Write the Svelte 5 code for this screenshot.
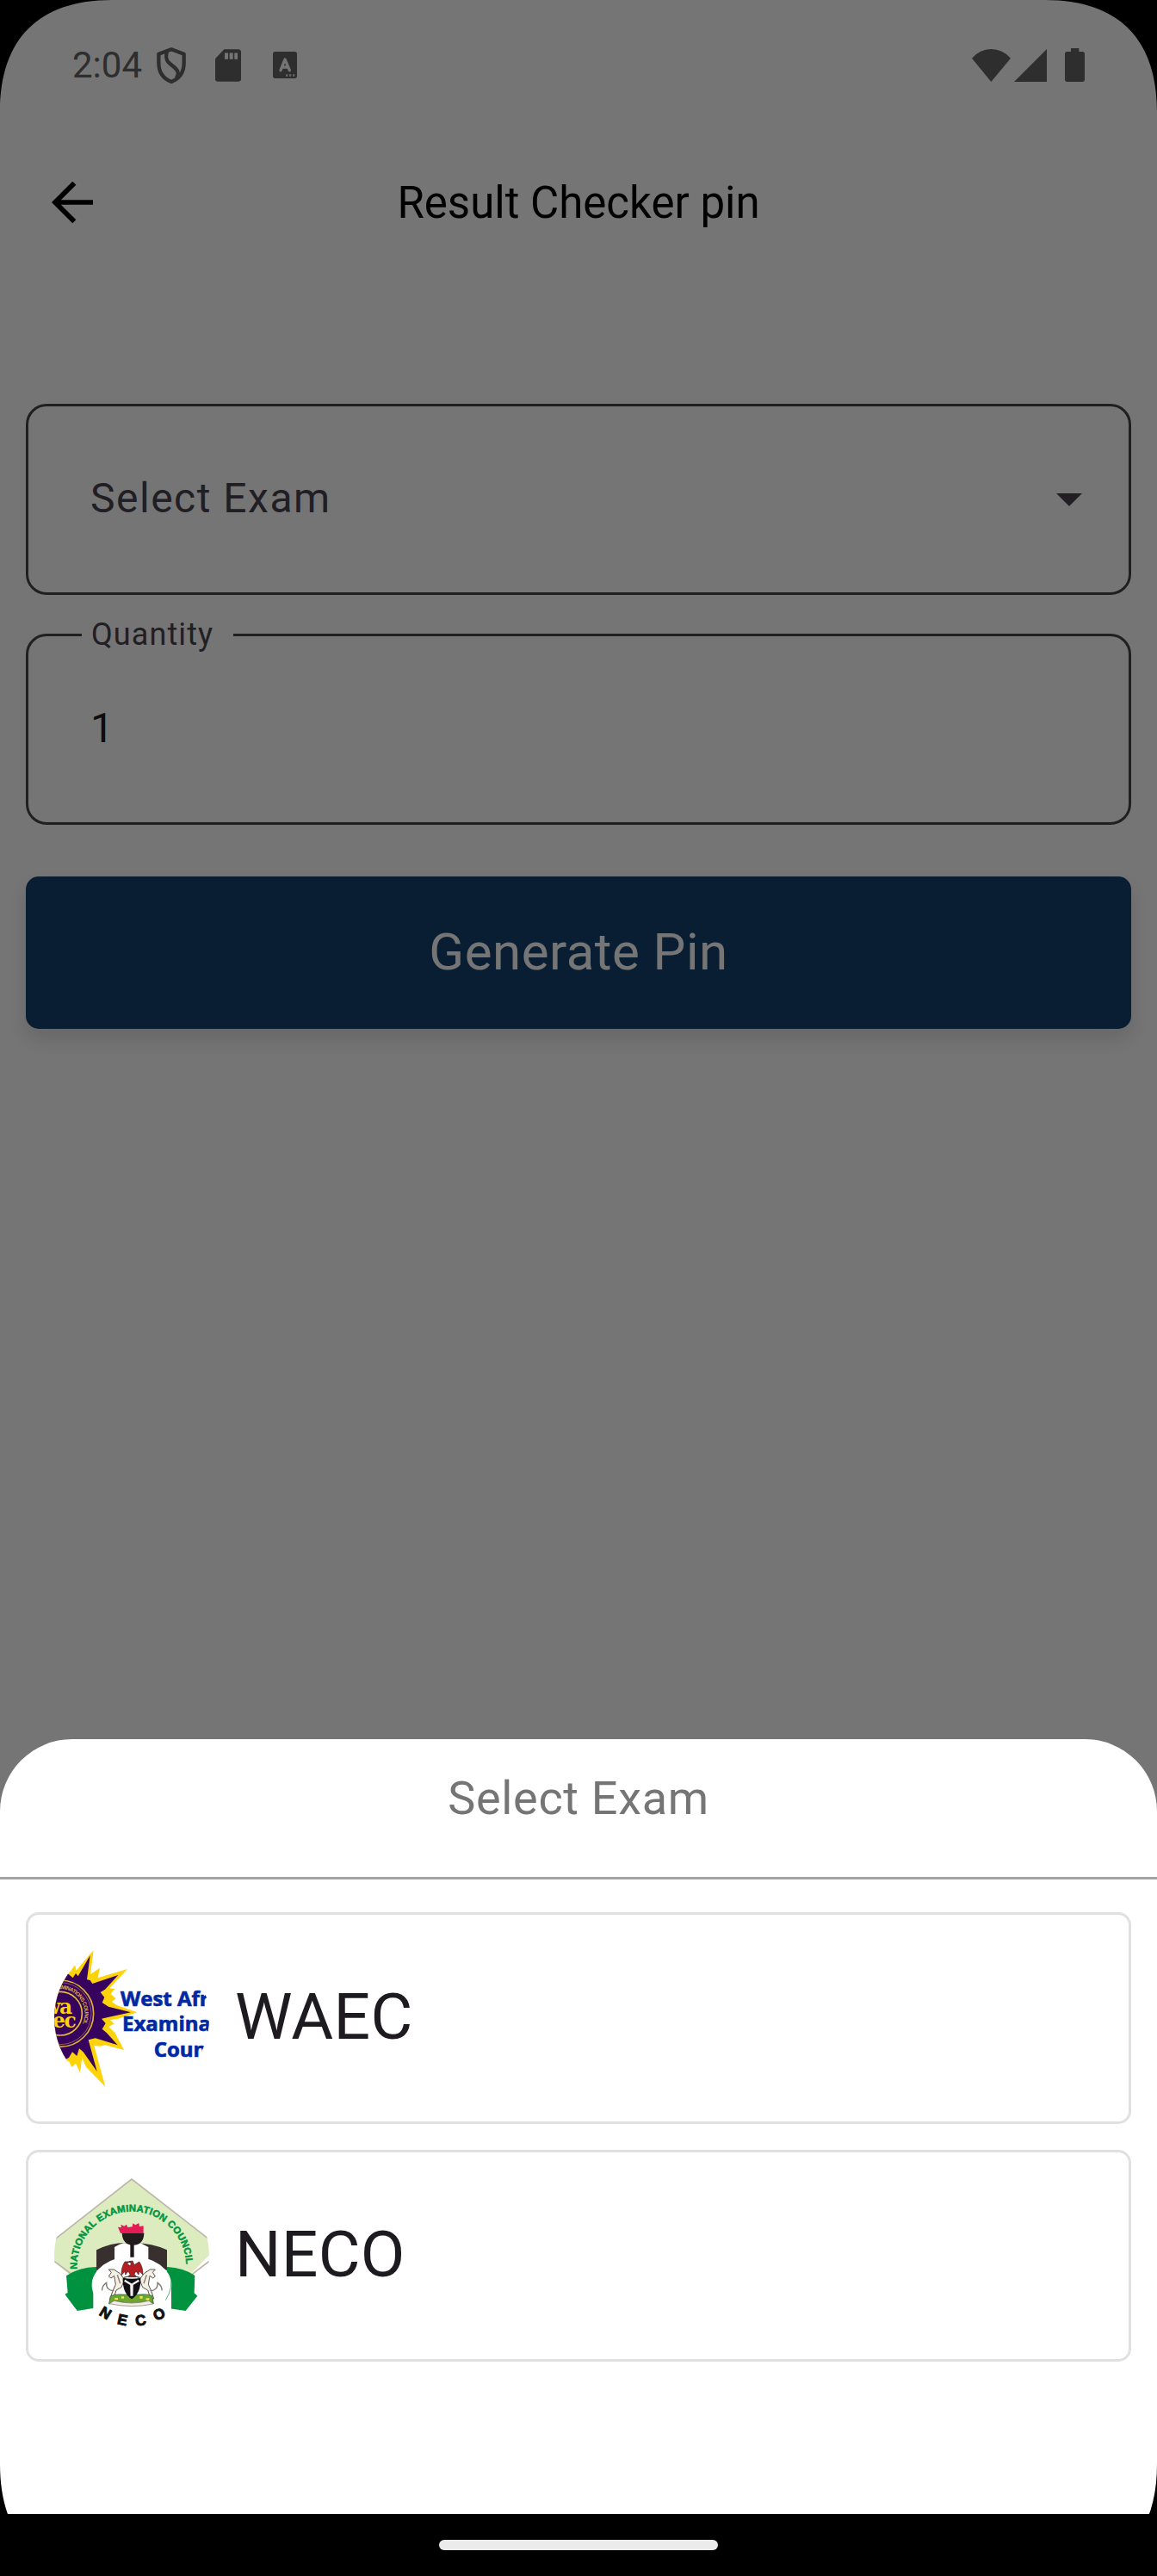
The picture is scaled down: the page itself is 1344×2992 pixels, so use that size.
<script lang="ts">
	let quantity = 1;
	let exams = ['WAEC', 'NECO'];
	let corners = ['left', 'right', 'bottom-left', 'bottom-right'];
</script>

<div class="screen">
	<div class="status-bar">
		<span class="time">2:04</span>
		<svg class="shield" viewBox="546 163 102 126">
			<path
				d="M597 170L553 186V217C553 246 567 271 597 283C627 271 641 246 641 217V186ZM582 176C577 196 578 208 591 219L607 232C623 245 623 256 615 270"
				fill="none"
				stroke="#646464"
				stroke-width="13"
				stroke-linejoin="round"
			/>
		</svg>
		<svg class="sd-card" viewBox="750 170 90 113">
			<path d="M781 170H830Q840 170 840 180V273Q840 283 830 283H760Q750 283 750 273V203Z" fill="#646464" />
			<path d="M783 183h12v22h-12zM800 183h12v22h-12zM817 183h11v22h-11z" fill="#fff" />
		</svg>
		<svg class="keyboard" viewBox="951 180 84 93">
			<rect x="951" y="180" width="84" height="93" rx="8" fill="#646464" />
			<path
				d="M978 245L993 207L1009 245M984 234H1003"
				fill="none"
				stroke="#fff"
				stroke-width="10"
				stroke-linecap="round"
				stroke-linejoin="round"
			/>
			<path d="M996 259h7v7h-7zM1008 259h7v7h-7zM1020 259h7v7h-7z" fill="#ddd" />
		</svg>
		<div class="signals">
			<svg class="wifi" viewBox="255 166 135 114">
				<path d="M255 198Q283 166 322 166Q362 166 390 198L322 280Z" fill="#646464" />
			</svg>
			<svg class="cell" viewBox="401 167 113 113">
				<path d="M514 167V280H401Z" fill="#646464" />
			</svg>
			<svg class="battery" viewBox="579 165 69 117">
				<path
					d="M600 165H628V177H640Q648 177 648 185V274Q648 282 640 282H587Q579 282 579 274V185Q579 177 587 177H600Z"
					fill="#646464"
				/>
			</svg>
		</div>
	</div>

	<header class="app-bar">
		<svg class="back" viewBox="180 632 144 144">
			<path d="M259 637L192 704L259 771M192 704H324" fill="none" stroke="#000" stroke-width="17" />
		</svg>
		<h1>Result Checker pin</h1>
	</header>

	<main>
		<div class="field">
			<span class="placeholder">Select Exam</span>
			<svg class="caret" viewBox="0 0 30 15"><path d="M0 0H30L15 15Z" fill="#49454f" /></svg>
		</div>
		<div class="field">
			<span class="label">Quantity</span>
			<span class="value">{quantity}</span>
		</div>
		<button>Generate Pin</button>
	</main>

	<div class="scrim"></div>

	<section class="sheet">
		<h2>Select Exam</h2>
		<div class="options">
			{#each exams as exam}
				<div class="option">
					{#if exam === 'WAEC'}
						<svg class="logo" viewBox="129 132 540 540">
							<path
								d="M100 190L178 232L186 240L200 212L206 236L266 165L255 250L288 227L281 262L384 231L322 298L340 300L326 318L344 334L330 345L346 357L418 382L350 405L324 408L338 422L318 432L340 452L372 513L306 496L290 500L268 498L307 641L240 572L226 540L219 592L204 560L190 574L180 552L160 560L100 600Z"
								fill="#fdd30a"
							/>
							<path
								d="M100 210L180 250L194 262L204 246L212 256L254 184L243 268L254 270L262 282L352 252L306 302L290 312L304 330L296 348L318 362L396 382L320 398L294 404L308 420L296 440L312 454L350 496L272 472L248 478L278 588L230 520L216 508L208 534L192 520L180 540L100 580Z"
								fill="#36035f"
							/>
							<circle cx="150" cy="386" r="116" fill="none" stroke="#d9ae3a" stroke-width="5" />
							<circle cx="150" cy="386" r="108" fill="none" stroke="#b98c45" stroke-width="2" />
							<circle cx="150" cy="386" r="76" fill="none" stroke="#e6bd2c" stroke-width="5" />
							<path id="seal-arc" d="M119 306A86 86 0 0 1 205 452" fill="none" />
							<text class="seal-ring">
								<textPath href="#seal-arc" textLength="202">EXAMINATIONS COUNCIL</textPath>
							</text>
							<text class="seal" text-anchor="end">
								<tspan x="209" y="387">wa</tspan>
								<tspan x="202" y="435">ec</tspan>
							</text>
							<text class="council">
								<tspan x="360" y="360">West African</tspan>
								<tspan x="366" y="448">Examinations</tspan>
								<tspan x="476" y="536">Council</tspan>
							</text>
						</svg>
					{:else}
						<svg class="logo" viewBox="129 120 540 540">
							<path d="M399 123L700 357L588 470H200L90 380L100 357Z" fill="#dcecbf" />
							<path
								d="M100 357L399 123L700 357M129 409L200 462M669 409L600 462"
								fill="none"
								stroke="#bdb5a8"
								stroke-width="5"
							/>
							<path
								d="M171 460Q215 430 276 429L290 560L265 573L209 582L166 524L176 519ZM619 459Q580 432 522 429L520 572L587 582L628 530L617 520Z"
								fill="#00923f"
							/>
							<path d="M276 370Q335 340 399 346Q466 344 522 370V440H276Z" fill="#37302e" />
							<path d="M339 360Q356 350 370 346H430L457 360V415H339Z" fill="#fff" />
							<path d="M265 480L537 480V610H265Z" fill="#fff" />
							<ellipse cx="399" cy="492" rx="139" ry="100" fill="#fff" />
							<path d="M531 450Q547 500 517 545" fill="none" stroke="#00923f" stroke-width="2" />
							<path d="M394 345h13v50h-13z" fill="#1d1718" />
							<path d="M365 311H442Q441 352 404 353Q367 352 365 311Z" fill="#211b1c" />
							<path
								d="M360 312L351 290L363 292L361 281L373 287L381 281L385 291L401 289L403 277L412 283L424 276L426 288L440 286V312Z"
								fill="#e21d56"
							/>
							<!-- coat of arms -->
							<path
								d="M395 410L375 411Q362 431 363 458L375 445L377 456L387 444L393 455L386 464H416L408 454L414 444L423 456L425 444L438 456Q438 428 425 411L408 422L402 408L390 410L397 417L394 426L382 417Z"
								fill="#b51d22"
								stroke="#40201e"
								stroke-width="2"
							/>
							<path
								d="M319 438L328 448L319 462L327 468L338 460L343 490L332 515L324 540L336 539L345 510L363 500L374 473L358 452L337 438ZM481 438L472 448L481 462L473 468L462 460L457 490L468 515L476 540L464 539L455 510L437 500L426 473L442 452L463 438Z"
								fill="#f4f0e6"
								stroke="#59524c"
								stroke-width="3"
							/>
							<path
								d="M337 512Q309 511 311 484Q294 496 296 511M463 512Q491 511 489 484Q506 496 504 511M349 457l10 30M451 457l-10 30"
								fill="none"
								stroke="#837a72"
								stroke-width="4"
							/>
							<path
								d="M325 531Q348 520 399 529Q450 520 470 530L475 557L457 548L399 559L342 548L320 558Z"
								fill="#6fa52e"
								stroke="#317143"
								stroke-width="3"
							/>
							<path
								d="M340 537h11v7h-11zM363 532h9v7h-9zM427 531h10v8h-10zM449 538h11v7h-11z"
								fill="#f3e545"
							/>
							<path d="M321 557L338 547Q399 563 459 547L473 558Q399 574 321 557Z" fill="#f2efe7" stroke="#796f65" stroke-width="2" />
							<path d="M368 467Q400 473 430 467Q432 520 399 541Q366 520 368 467Z" fill="#121014" />
							<path
								d="M374 476L397 490L398 530M424 476L401 490L400 530"
								fill="none"
								stroke="#f2f2f2"
								stroke-width="7"
							/>
							<path d="M371 466Q400 457 427 466" fill="none" stroke="#454545" stroke-width="4" />
							<path id="neco-arc" d="M209 437A190 190 0 1 1 587 451" fill="none" />
							<text class="neco-ring">
								<textPath href="#neco-arc" textLength="602">NATIONAL EXAMINATION COUNCIL</textPath>
							</text>
							<path id="neco-base" d="M283 594Q400 678 535 590" fill="none" />
							<text class="neco-name">
								<textPath href="#neco-base" textLength="252">NECO</textPath>
							</text>
						</svg>
					{/if}
					<span class="name">{exam}</span>
				</div>
			{/each}
		</div>
	</section>

	<div class="nav-bar"><div class="handle"></div></div>

	{#each corners as corner}
		<svg class="corner {corner}" viewBox="0 0 130 130"><path d="M0 0H130C45 0 0 45 0 130Z" /></svg>
	{/each}
</div>

<style>
	:global(body) {
		margin: 0;
		background: #000;
	}

	.screen {
		position: relative;
		width: 1344px;
		height: 2992px;
		overflow: hidden;
		background: #fff;
		font-family: Roboto, sans-serif;
	}

	svg {
		display: block;
		flex: none;
	}

	.status-bar {
		display: flex;
		align-items: center;
		box-sizing: border-box;
		height: 151px;
		padding: 0 84px;
	}

	.time {
		width: 98px;
		color: #646464;
		font-size: 42px;
		line-height: 50px;
	}

	.shield {
		width: 34px;
		height: 42px;
		margin-right: 34px;
	}

	.sd-card {
		width: 30px;
		height: 38px;
		margin-right: 37px;
	}

	.keyboard {
		width: 28px;
		height: 31px;
	}

	.signals {
		display: flex;
		align-items: center;
		margin-left: auto;
	}

	.wifi {
		width: 45px;
		height: 38px;
		margin-right: 4px;
	}

	.cell {
		width: 38px;
		height: 38px;
		margin-right: 21px;
	}

	.battery {
		width: 23px;
		height: 39px;
	}

	.app-bar {
		display: grid;
		grid-template-columns: 48px 1fr 48px;
		align-items: center;
		height: 168px;
		padding: 0 60px;
	}

	.back {
		width: 48px;
		height: 48px;
	}

	h1 {
		margin: 0;
		padding-top: 2px;
		color: #000;
		font-size: 51px;
		font-weight: 400;
		line-height: 60px;
		text-align: center;
	}

	main {
		display: flex;
		flex-direction: column;
		padding: 150px 30px 0;
	}

	.field {
		position: relative;
		display: flex;
		align-items: center;
		justify-content: space-between;
		box-sizing: border-box;
		height: 222px;
		margin-bottom: 45px;
		padding: 0 54px 3px 72px;
		border: 3px solid #464646;
		border-radius: 24px;
		color: #49454f;
		font-size: 48px;
		letter-spacing: 1.5px;
		line-height: 60px;
	}

	.label {
		position: absolute;
		top: -22px;
		left: 62px;
		box-sizing: border-box;
		width: 176px;
		padding-left: 11px;
		background: #fff;
		font-size: 36px;
		letter-spacing: 1.1px;
		line-height: 40px;
	}

	.value {
		color: #1d1b20;
	}

	.caret {
		width: 30px;
		height: 15px;
		margin-top: 4px;
	}

	button {
		height: 177px;
		margin-top: 15px;
		padding: 0 0 2px;
		border: 0;
		border-radius: 15px;
		background: #15416f;
		box-shadow: 0 12px 24px rgba(0, 0, 0, 0.13);
		color: #fff;
		font-family: inherit;
		font-size: 60px;
		letter-spacing: 0.5px;
	}

	.scrim {
		position: absolute;
		inset: 0;
		background: rgba(0, 0, 0, 0.54);
	}

	.sheet {
		position: absolute;
		inset: 2020px 0 0;
		border-radius: 84px 84px 0 0;
		background: #fff;
	}

	h2 {
		box-sizing: border-box;
		height: 163px;
		margin: 0;
		padding-top: 36px;
		border-bottom: 3px solid #a3a3a3;
		color: #757575;
		font-size: 54px;
		font-weight: 400;
		letter-spacing: 0.7px;
		line-height: 66px;
		text-align: center;
	}

	.options {
		display: flex;
		flex-direction: column;
		gap: 30px;
		padding: 38px 30px;
	}

	.option {
		display: flex;
		align-items: center;
		gap: 30px;
		box-sizing: border-box;
		height: 246px;
		padding-left: 30px;
		border: 3px solid #e0e0e0;
		border-radius: 15px;
		color: #1d1b20;
		font-size: 75px;
	}

	.name {
		padding-bottom: 5px;
		letter-spacing: 0.3px;
	}

	.logo {
		width: 180px;
		height: 180px;
		border-radius: 50%;
	}

	.seal-ring {
		fill: #d9b03a;
		font: bold 19px 'Liberation Sans', sans-serif;
	}

	.seal {
		fill: #fdd30a;
		font: bold 70px 'DejaVu Serif', serif;
		letter-spacing: -4px;
	}

	.council {
		fill: #0029a3;
		stroke: #0029a3;
		stroke-width: 2px;
		font: 700 72px 'Open Sans', sans-serif;
	}

	.neco-ring {
		fill: #009640;
		stroke: #009640;
		stroke-width: 1.5px;
		font: bold 34px 'Liberation Sans', sans-serif;
	}

	.neco-name {
		fill: #111;
		stroke: #111;
		stroke-width: 3px;
		font: bold 51px 'Liberation Sans', sans-serif;
	}

	.nav-bar {
		position: absolute;
		inset: 2920px 0 0;
		display: flex;
		justify-content: center;
		background: #000;
	}

	.handle {
		width: 324px;
		height: 12px;
		margin-top: 30px;
		border-radius: 6px;
		background: #ebebeb;
	}

	.corner {
		position: absolute;
		top: 0;
		left: 0;
		width: 130px;
		height: 130px;
	}

	.corner.right {
		left: auto;
		right: 0;
		transform: scaleX(-1);
	}

	.corner.bottom-left {
		top: auto;
		bottom: 0;
		transform: scaleY(-1);
	}

	.corner.bottom-right {
		inset: auto 0 0 auto;
		transform: scale(-1);
	}
</style>
